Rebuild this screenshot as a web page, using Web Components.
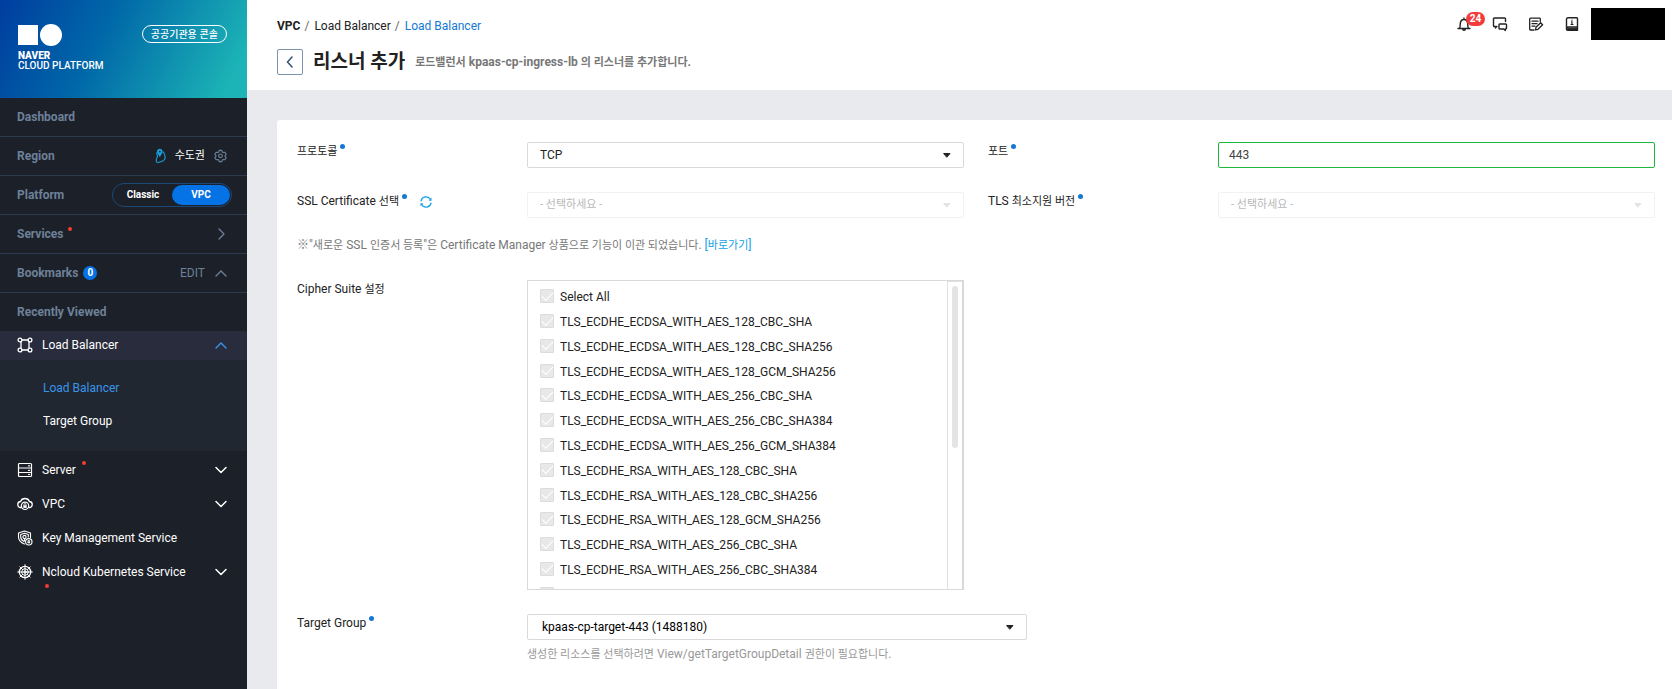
<!DOCTYPE html>
<html lang="ko">
<head>
<meta charset="utf-8">
<title>리스너 추가</title>
<style>
  html, body { margin: 0; }
  body {
    font: 12px/18px Roboto, "Noto Sans CJK KR", sans-serif;
    color: #222;
    background: #e9eaee;
  }
</style>
</head>
<body>
<console-app></console-app>

<script>
const svg = (w, h, body, box) =>
  `<svg width="${w}" height="${h}" viewBox="${box || `0 0 ${w} ${h}`}" fill="none" stroke="currentColor" stroke-linecap="round" stroke-linejoin="round" aria-hidden="true">${body}</svg>`;

const ICONS = {
  up: svg(12, 12, '<path d="M1 9 6 4l5 5" stroke-width="1.4"/>'),
  down: svg(12, 12, '<path d="M1 3.500 6 8.500l5-5" stroke-width="1.5"/>'),
  right: svg(12, 12, '<path d="M4 1l5 5-5 5" stroke-width="1.3"/>'),
  back: svg(12, 12, '<path d="M8 1 3.500 6 8 11" stroke-width="1.5"/>'),
  gear: svg(13, 14, '<path d="M5.600 1h2.800l.5 1.700 1.100.6 1.700-.4 1.400 2.300-1.200 1.300v1l1.200 1.300-1.400 2.300-1.700-.4-1.100.6-.5 1.700H5.600l-.5-1.700-1.100-.6-1.700.4L.9 8.800l1.200-1.300v-1L.9 5.200l1.400-2.300 1.700.4 1.100-.6z" stroke-width="1.200"/><circle cx="7" cy="6.800" r="2" stroke-width="1.200"/>', "0 0 14 14"),
  map: svg(12, 16, '<path d="M2 4.500C1 6 2.800 7 2.500 8.500 2.200 10 1 10.500 1.300 12c.2 1.300-.3 2 .6 2.300C3.500 14.800 8 13.500 9.500 11.500 11 9.500 9.500 6 8.500 4" stroke-width="1.100"/><path d="M4.800 8C3 5.800 2.400 4.800 2.400 3.600a2.400 2.400 0 0 1 4.800 0C7.200 4.800 6.600 5.800 4.800 8z" fill="currentColor"/><circle cx="4.800" cy="3.600" r=".9" fill="#1c2028" stroke="none"/>'),
  balancer: svg(16, 16, '<g stroke-width="1.300"><circle cx="3" cy="3" r="1.900"/><circle cx="13" cy="3" r="1.900"/><circle cx="3" cy="13" r="1.900"/><circle cx="13" cy="13" r="1.900"/><path d="M5 3h6M5 13h6M4 5v6M12 5v6"/></g>'),
  server: svg(16, 16, '<g stroke-width="1.200"><rect x="1.500" y="1.500" width="13" height="13" rx="1"/><path d="M1.500 6h13M1.500 10.500h13M11.500 3.800h1M11.500 8.300h1M11.500 12.500h1"/></g>'),
  vpc: svg(16, 16, '<path d="M4 11.500a3 3 0 0 1-.4-6C4.200 3.600 5.800 2.500 8 2.500s3.800 1.100 4.400 3a3 3 0 0 1-.4 6" stroke-width="1.300"/><circle cx="8" cy="9.800" r="3.700" stroke-width="1.200"/><rect x="6.300" y="9.300" width="3.400" height="2.600" fill="currentColor" stroke="none"/><path d="M7 9.300V8.500a1 1 0 0 1 2 0v.8" stroke-width=".8"/>'),
  key: svg(16, 16, '<g stroke-width="1.100"><path d="M7.500 14C3.500 12.500 1.500 10.500 1.500 7V3l6-2 6 2v4.500M7 11.500C4.800 10.500 3.700 9 3.700 7V4.500l3.800-1.200 3.800 1.200V7"/><circle cx="7.500" cy="7" r="1.600"/><path d="M7.500 8.600v2.200"/><circle cx="11.800" cy="11.800" r="3.200"/></g><path d="M10.500 11.500h2.600v1.800h-2.600z" fill="currentColor" stroke="none"/><path d="M11 11.500v-1h1.600v1" stroke-width=".8"/>'),
  kube: svg(16, 16, '<circle cx="8" cy="8" r="5.700" stroke-width="1.300"/><circle cx="8" cy="8" r="3.300"/><circle cx="8" cy="8" r="1.200"/><path d="M8 .7v3.900M8 11.400v3.900M.7 8h3.900M11.400 8h3.900M2.900 2.900l2.700 2.700M10.400 10.400l2.700 2.700M13.100 2.900l-2.700 2.700M5.600 10.400l-2.700 2.700M8 5v6M5 8h6"/>'),
  bell: svg(14, 16, '<path d="M1 12.500h12M2.500 12.500c.6-1.200.7-2 .7-3.800C3.200 5.500 4.300 3.500 7 3.500s3.800 2 3.800 5.200c0 1.800.1 2.600.7 3.800M7 2v1M5.800 13.500a1.300 1.300 0 0 0 2.400 0" stroke-width="1.400"/>'),
  chat: svg(16, 16, '<path d="M5 10.500H4.500L3.500 12v-1.500H2.300a.8.8 0 0 1-.8-.8V2.800A.8.8 0 0 1 2.300 2h10.400a.8.8 0 0 1 .8.800V5.500" stroke-width="1.400"/><path d="M7.800 8h5.900a.8.8 0 0 1 .8.800v3.400a.8.8 0 0 1-.8.800h-.4v1.500L11.700 13H7.800a.8.8 0 0 1-.8-.8V8.800A.8.800 0 0 1 7.800 8z" stroke-width="1.400"/>'),
  note: svg(16, 16, '<path d="M6 14H2.500a.8.8 0 0 1-.8-.8V3a.8.8 0 0 1 .8-.8h9a.8.8 0 0 1 .8.800v2.500M4 5.200h6M4 7.700h5M4 10.200h3" stroke-width="1.300"/><path d="m7.500 13.800.5-2.500 4.600-4.600 2 2L10 13.300z" stroke-width="1.300"/>'),
  book: svg(14, 16, '<path d="M12.500 11V2.500a.8.8 0 0 0-.8-.8H3a1.500 1.500 0 0 0-1.500 1.500v9M12.500 11H3a1.500 1.500 0 0 0 0 3.300h9.500z" stroke-width="1.400"/><path d="M2.500 12.200h10v2h-10z" fill="currentColor" stroke-width="1"/><path d="M7 4v.2M6.500 5.800H7v2.700M6 8.500h2" stroke-width="1.200"/>'),
  refresh: svg(12, 12, '<path d="M1 4.800A5 5 0 0 1 10.300 3.500M11 7.200A5 5 0 0 1 1.700 8.500" stroke-width="1.300"/><path d="M11.500 1.500v3.300H8.600zM.5 10.500V7.200h2.900z" fill="currentColor" stroke="none"/>'),
  caret: svg(8, 5, '<path d="M1 .5h6L4 4z" fill="currentColor" stroke-width="1"/>')
};

/* Hangul is set one size smaller than the Latin text it stands in */
const ko = text => text.replace(/[가-힣]+(?: [가-힣]+)*/g, '<span lang="ko">$&</span>');
const KO_STYLE = "[lang=ko] { font-size: 11px; line-height: 1; }";

const define = (name, render) => customElements.define(name, class extends HTMLElement {
  connectedCallback() {
    if (this.shadowRoot) return;
    this.attachShadow({ mode: "open" }).innerHTML = render(this);
  }
});

/* Sidebar brand banner */
define("brand-banner", () => `
<style>
  :host { display: flex; justify-content: space-between; align-items: flex-start; box-sizing: border-box;
    height: 98px; padding: 24px 20px 0 18px; color: #fff;
    background: linear-gradient(117deg, #003d9f 0%, #0067a8 40%, #1cb4b6 92%); }
  svg { display: block; margin-bottom: 5px; }
  a { color: inherit; text-decoration: none; font: 500 10px/10px Roboto, sans-serif; }
  b { display: block; font-weight: 900; }
  button { box-sizing: border-box; height: 18px; margin: 1px 0 0; padding: 0 8px; border: 1px solid #fff; border-radius: 9px;
    background: none; color: inherit; font: 500 10px/16px "Noto Sans CJK KR", sans-serif; }
</style>
<a href="#"><svg width="44" height="22" viewBox="0 0 44 22" fill="#fff" aria-hidden="true"><path d="M0 1h20v20H0z"/><circle cx="33" cy="11" r="11"/></svg><b>NAVER</b>CLOUD PLATFORM</a>
<button>공공기관용 콘솔</button>`);

/* One ruled row of the sidebar: a title and its controls */
define("side-row", el => `
<style>
  :host { display: flex; align-items: center; box-sizing: border-box; height: 39px; padding: 0 20px 0 17px;
    border-bottom: 1px solid #2c3a50; color: #6d8199; }
  :host([last]) { height: 38px; border-bottom: 0; }
  :host([wide]) { padding-right: 15px; }
  a { color: inherit; text-decoration: none; font-weight: 700; }
  i { width: 4px; height: 4px; border-radius: 50%; background: #f23c34; margin: 0 0 10px 4px; }
  em { min-width: 14px; height: 14px; border-radius: 7px; background: #0573e6; color: #fff; margin-left: 5px;
    font: 700 10px/14px Roboto, sans-serif; text-align: center; }
  span { display: flex; align-items: center; margin-left: auto; }
</style>
<a href="#">${el.getAttribute("label")}</a>${el.hasAttribute("fresh") ? "<i></i>" : ""}${el.hasAttribute("count") ? `<em>${el.getAttribute("count")}</em>` : ""}
<span><slot></slot></span>`);

define("region-picker", () => `
<style>
  :host { display: flex; align-items: center; font-size: 11px; color: #fff; }
  svg { display: block; }
  .map { color: #19a0e0; margin-right: 8px; }
  button { display: flex; padding: 0; border: 0; background: none; color: #6d8199; margin-left: 9px; }
</style>
<span class="map">${ICONS.map}</span>수도권<button aria-label="설정">${ICONS.gear}</button>`);

define("platform-switch", () => `
<style>
  :host { display: flex; box-sizing: border-box; width: 120px; height: 24px; padding: 1px; border: 1px solid #1c4878; border-radius: 12px; }
  button { flex: 1; padding: 0; border: 0; border-radius: 10px; background: none; color: #fff; font: 700 10px/20px Roboto, sans-serif; }
  button[aria-pressed=true] { background: #0573e6; }
</style>
<button aria-pressed="false">Classic</button><button aria-pressed="true">VPC</button>`);

define("fold-button", el => `
<style>
  :host { display: flex; }
  button { display: flex; padding: 0; border: 0; background: none; color: inherit; font: 12px/18px Roboto, sans-serif; align-items: center; gap: 10px; }
</style>
<button aria-label="${el.getAttribute("label")}"><slot></slot>${ICONS[el.getAttribute("icon")]}</button>`);

/* A product of the menu */
define("menu-item", el => `
<style>
  :host { display: flex; align-items: center; box-sizing: border-box; height: 34px; padding: 0 20px 0 17px; color: #fff; }
  :host([open]) { height: 29px; padding-bottom: 1px; background: #282c3c; }
  svg { display: block; }
  a { display: flex; align-items: center; gap: 9px; color: inherit; text-decoration: none; position: relative; }
  i { position: absolute; left: calc(100% + 6px); top: 0; width: 4px; height: 4px; border-radius: 50%; background: #f23c34; }
  :host([wraps]) i { left: 28px; top: 21px; }
  button { display: flex; margin-left: auto; padding: 0; border: 0; background: none; color: inherit; }
  :host([open]) button { color: #3b94ec; }
</style>
<a href="#">${ICONS[el.getAttribute("icon")]}<span><slot></slot></span>${el.hasAttribute("fresh") ? "<i></i>" : ""}</a>
${el.hasAttribute("fold") ? `<button aria-label="펼치기">${ICONS[el.getAttribute("fold")]}</button>` : ""}`);

define("sub-menu", () => `
<style>
  :host { display: flex; flex-direction: column; padding: 12px 0 13px 43px; background: #202730; margin-bottom: 2px; }
  a { line-height: 33px; color: #fff; text-decoration: none; }
  a.on { color: #3b94ec; }
</style>
<a class="on" href="#">Load Balancer</a><a href="#">Target Group</a>`);

define("side-bar", () => `
<style>
  :host { display: block; background: #1c2028; }
</style>
<brand-banner></brand-banner>
<nav>
<side-row label="Dashboard"></side-row>
<side-row label="Region"><region-picker></region-picker></side-row>
<side-row label="Platform" wide><platform-switch></platform-switch></side-row>
<side-row label="Services" fresh><fold-button icon="right" label="Services"></fold-button></side-row>
<side-row label="Bookmarks" count="0"><fold-button icon="up" label="EDIT">EDIT</fold-button></side-row>
<side-row label="Recently Viewed" last></side-row>
<menu-item open icon="balancer" fold="up">Load Balancer</menu-item>
<sub-menu></sub-menu>
<menu-item icon="server" fold="down" fresh>Server</menu-item>
<menu-item icon="vpc" fold="down">VPC</menu-item>
<menu-item icon="key">Key Management Service</menu-item>
<menu-item icon="kube" fold="down" fresh wraps>Ncloud Kubernetes Service</menu-item>
</nav>`);

/* Tool icons at the right of the header */
define("tool-bar", () => `
<style>
  :host { display: flex; align-items: center; gap: 16px; }
  button { position: relative; display: flex; justify-content: center; width: 20px; padding: 0; border: 0; background: none; color: #222; }
  em { position: absolute; left: 12px; top: -4px; width: 19px; height: 14px; border-radius: 7px; background: #f23c3c; color: #fff;
    font: 700 10px/14px Roboto, sans-serif; text-align: center; }
  .account { width: 74px; height: 32px; background: #000; margin-left: -7px; }
</style>
<button aria-label="알림">${ICONS.bell}<em>24</em></button>
<button aria-label="문의">${ICONS.chat}</button>
<button aria-label="메모">${ICONS.note}</button>
<button aria-label="가이드">${ICONS.book}</button>
<div class="account"></div>`);

define("page-header", () => `
<style>
  ${KO_STYLE}
  :host { display: flex; justify-content: space-between; align-items: flex-start; box-sizing: border-box; height: 90px;
    padding: 8px 7px 0 30px; background: #fff; }
  nav { display: flex; gap: 5px; margin: 9px 0 14px; }
  nav a { color: inherit; text-decoration: none; }
  nav .here { color: #1478d4; }
  nav i { color: #666; margin-left: -1px; font-style: normal; }
  .title { display: flex; align-items: center; }
  button { display: flex; align-items: center; justify-content: center; box-sizing: border-box; width: 26px; height: 26px; padding: 0;
    border: 1px solid #7c93ad; border-radius: 2px; background: #fff; color: #33506f; }
  h1 { margin: 0 10px; font: 700 19px/26px Roboto, "Noto Sans CJK KR", sans-serif; }
  p { margin: 0; font-weight: 700; color: #777; }
</style>
<div>
<nav aria-label="경로"><a href="#"><b>VPC</b></a><i>/</i><a href="#">Load Balancer</a><i>/</i><a class="here" href="#">Load Balancer</a></nav>
<div class="title"><button aria-label="뒤로">${ICONS.back}</button><h1>리스너 추가</h1><p>${ko("로드밸런서 kpaas-cp-ingress-lb 의 리스너를 추가합니다.")}</p></div>
</div>
<tool-bar></tool-bar>`);

/* A labelled control: a drop-down, or a text box when kind="text" */
define("form-field", el => {
  const label = ko(el.getAttribute("label")), value = el.getAttribute("value");
  const off = el.hasAttribute("disabled") ? "disabled" : "";
  const control = el.getAttribute("kind") === "text"
    ? `<input id="c" type="text" value="${value}">`
    : `<select id="c" ${off}><option>${value}</option></select>${ICONS.caret}`;
  return `
<style>
  ${KO_STYLE}
  :host { display: flex; align-items: flex-start; }
  .name { display: flex; flex: none; width: 230px; }
  i { width: 5px; height: 5px; border-radius: 50%; background: #1478d4; margin: 2px 0 0 3px; }
  .name button { display: flex; padding: 0; border: 0; background: none; color: #14a0e8; margin: 4px 0 0 13px; }
  .box { position: relative; flex: 1; }
  :host([size=long]) .box { flex: 0 1 500px; }
  select, input { display: block; appearance: none; box-sizing: border-box; width: 100%; height: 26px; margin: 0; padding: 0 30px 0 12px;
    border: 1px solid #d9d9d9; border-radius: 2px; background: #fff; color: #222; font: inherit; }
  :host([size=long]) select { padding-left: 14px; color: #000; }
  input { padding-left: 10px; border-color: #20b83a; color: #444; }
  select:disabled { border-color: #f2f2f2; color: #b8b8b8; opacity: 1; font-size: 11px; }
  .box svg { position: absolute; right: 13px; top: 11px; pointer-events: none; }
  :host([disabled]) .box svg { color: #e4e4e4; }
</style>
<div class="name"><label for="c">${label}</label><i></i>${el.hasAttribute("refresh") ? `<button aria-label="새로고침">${ICONS.refresh}</button>` : ""}</div>
<div class="box">${control}<slot></slot></div>`;
});

define("cipher-list", () => {
  const rows = ["Select All"];
  for (const kx of ["ECDSA", "RSA"])
    for (const tail of ["128_CBC_SHA", "128_CBC_SHA256", "128_GCM_SHA256", "256_CBC_SHA", "256_CBC_SHA384", "256_GCM_SHA384"])
      rows.push(`TLS_ECDHE_${kx}_WITH_AES_${tail}`);
  /* The last row only peeks in at the lower edge, so its name is left to the aria-label */
  const row = (name, i) => i < rows.length - 1
    ? `<label><input type="checkbox" checked disabled>${name}</label>`
    : `<label><input type="checkbox" checked disabled aria-label="${name}"></label>`;
  return `
<style>
  ${KO_STYLE}
  :host { display: flex; align-items: flex-start; }
  .name { flex: none; width: 230px; }
  .box { flex: 1; display: flex; box-sizing: border-box; height: 310px; border: 1px solid #d9d9d9; border-right-width: 2px; overflow: hidden; }
  .rows { flex: 1; display: grid; grid-auto-rows: 1fr; height: 322px; padding: 4px 0 0 12px; }
  label { display: flex; align-items: center; gap: 6px; }
  input { appearance: none; box-sizing: border-box; width: 14px; height: 14px; margin: 0 0 2px; border: 1px solid #dcdcdc; border-radius: 1px;
    background: #e8e8e8; display: grid; place-items: center; }
  input::before { content: ""; box-sizing: border-box; width: 11px; height: 6px; border: solid #fff; border-width: 0 0 1px 1px; rotate: -45deg; margin-bottom: 3px; }
  .track { width: 6px; padding: 4px 4px 0; border-left: 1px solid #e0e0e0; border-top: 1px solid #e0e0e0; }
  .thumb { width: 6px; height: 162px; border-radius: 3px; background: #e4e4e4; }
</style>
<div class="name" id="n">${ko("Cipher Suite 설정")}</div>
<div class="box" role="group" aria-labelledby="n">
<div class="rows">${rows.map(row).join("")}</div>
<div class="track"><div class="thumb"></div></div>
</div>`;
});

define("listener-form", () => `
<style>
  ${KO_STYLE}
  :host { display: block; padding: 22px 17px 22px 20px; background: #fff; border-radius: 3px 0 0 0; }
  form { display: grid; grid-template-columns: 1fr 1fr; column-gap: 24px; row-gap: 24px; }
  .wide { grid-column: 1 / -1; }
  p { margin: 0; color: #777; }
  p.note { margin: -6px 0 2px; }
  p.note a { color: #14a0e8; text-decoration: none; }
  p.help { color: #999; margin-top: 5px; }
</style>
<form>
<form-field label="프로토콜" value="TCP"></form-field>
<form-field label="포트" kind="text" value="443"></form-field>
<form-field label="SSL Certificate 선택" value="- 선택하세요 -" disabled refresh></form-field>
<form-field label="TLS 최소지원 버전" value="- 선택하세요 -" disabled></form-field>
<p class="wide note">${ko('※"새로운 SSL 인증서 등록"은 Certificate Manager 상품으로 기능이 이관 되었습니다.')} <a href="#">${ko("[바로가기]")}</a></p>
<cipher-list></cipher-list>
<form-field class="wide" size="long" label="Target Group" value="kpaas-cp-target-443 (1488180)"><p class="help">${ko("생성한 리소스를 선택하려면 View/getTargetGroupDetail 권한이 필요합니다.")}</p></form-field>
</form>`);

define("console-app", () => `
<style>
  :host { display: grid; grid-template-columns: 247px 1fr; min-height: 100vh; }
  main { display: flex; flex-direction: column; min-width: 0; }
  listener-form { flex: 1; margin: 30px 0 0 30px; }
</style>
<side-bar></side-bar>
<main><page-header></page-header><listener-form></listener-form></main>`);
</script>
</body>
</html>
